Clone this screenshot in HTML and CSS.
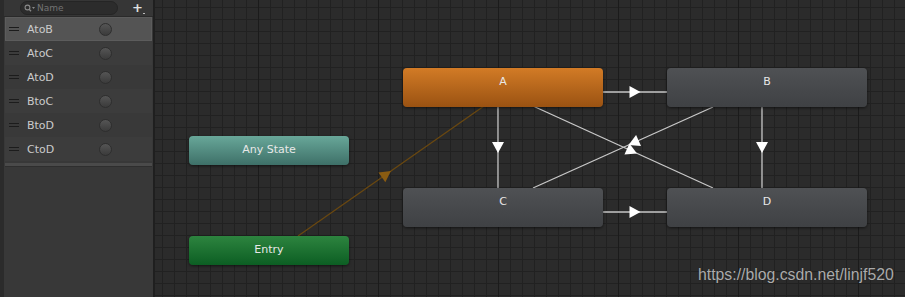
FILE: index.html
```html
<!DOCTYPE html>
<html lang="en">
<head>
  <meta charset="UTF-8" />
  <title>Animator</title>
  <link rel="stylesheet" href="styles.css">
</head>
<body>
  <aside class="panel">
    <div class="toolbar">
      <div class="search">
        <svg class="search-icon" width="12" height="9" viewBox="0 0 12 9">
          <circle cx="3.5" cy="3.5" r="2.4" fill="none" stroke="#8a8a8a" stroke-width="1.1"/>
          <line x1="5.2" y1="5.2" x2="7" y2="7.2" stroke="#8a8a8a" stroke-width="1.3"/>
          <polygon points="8,3 11,3 9.5,5" fill="#8a8a8a"/>
        </svg>
        <span class="placeholder">Name</span>
      </div>
      <div class="add">+<span class="add-dot"></span></div>
    </div>

    <ul class="params">
      <li class="param selected"><span class="grip"></span><span class="name">AtoB</span><span class="toggle"></span></li>
      <li class="param"><span class="grip"></span><span class="name">AtoC</span><span class="toggle"></span></li>
      <li class="param"><span class="grip"></span><span class="name">AtoD</span><span class="toggle"></span></li>
      <li class="param"><span class="grip"></span><span class="name">BtoC</span><span class="toggle"></span></li>
      <li class="param"><span class="grip"></span><span class="name">BtoD</span><span class="toggle"></span></li>
      <li class="param"><span class="grip"></span><span class="name">CtoD</span><span class="toggle"></span></li>
    </ul>
    <div class="list-footer"></div>
  </aside>

  <main class="graph">
    <!-- transitions -->
    <svg class="links" width="750" height="297" viewBox="0 0 750 297">
      <g stroke="#c9c9c9" stroke-width="1.3" fill="none">
        <line x1="447" y1="92" x2="512" y2="92"/>
        <line x1="448" y1="212" x2="512" y2="212"/>
        <line x1="343" y1="107" x2="343" y2="188"/>
        <line x1="607" y1="107" x2="607" y2="188"/>
        <line x1="558" y1="107" x2="378" y2="188"/>
        <line x1="378" y1="106" x2="558" y2="188"/>
      </g>
      <line x1="143" y1="236" x2="329" y2="106" stroke="#6a4810" stroke-width="1.3"/>
      <g fill="#ffffff">
        <polygon points="-5,-6 6,0 -5,6" transform="translate(479.5 92)"/>
        <polygon points="-5,-6 6,0 -5,6" transform="translate(479.5 212)"/>
        <polygon points="-5,-6 6,0 -5,6" transform="translate(343 147) rotate(90)"/>
        <polygon points="-5,-6 6,0 -5,6" transform="translate(607 147) rotate(90)"/>
        <polygon points="-5,-6 6,0 -5,6" transform="translate(479 142.5) rotate(155.8)"/>
        <polygon points="-5,-6 6,0 -5,6" transform="translate(476.5 151) rotate(24.5)"/>
      </g>
      <polygon points="-5,-6 6,0 -5,6" fill="#8a5c12" transform="translate(231 174.5) rotate(-34.9)"/>
    </svg>

    <div class="node state default" style="left:248px; top:68px;">A</div>
    <div class="node state" style="left:512px; top:68px;">B</div>
    <div class="node state" style="left:248px; top:188px;">C</div>
    <div class="node state" style="left:512px; top:188px;">D</div>
    <div class="node special any" style="left:34px; top:136px;">Any State</div>
    <div class="node special entry" style="left:34px; top:236px;">Entry</div>

    <div class="watermark">https://blog.csdn.net/linjf520</div>
  </main>
</body>
</html>
```

FILE: styles.css
```css
body {
  margin: 0;
  width: 905px;
  height: 297px;
  display: flex;
  overflow: hidden;
  font-family: 'DejaVu Sans', 'Noto Sans', sans-serif;
  font-size: 11px;
  background: #2a2a2a;
}

/* left parameter panel */
.panel {
  width: 149px;
  height: 297px;
  flex: none;
  background: #383838;
  border-left: 4px solid #2b2b2b;
  border-right: 2px solid #1f1f1f;
  display: flex;
  flex-direction: column;
}
.toolbar {
  height: 16px;
  border-bottom: 1px solid #2a2a2a;
  background: #363636;
  display: flex;
  align-items: center;
}
.search {
  margin-left: 16px;
  width: 96px;
  height: 12px;
  border-radius: 7px;
  background: #2c2c2c;
  border: 1px solid #252525;
  display: flex;
  align-items: center;
}
.search-icon {
  margin-left: 3px;
}
.placeholder {
  margin-left: 1px;
  color: #737373;
  font-size: 9px;
  line-height: 12px;
}
.add {
  position: relative;
  margin-left: 14px;
  color: #e0e0e0;
  font-weight: bold;
  font-size: 13px;
  line-height: 14px;
}
.add-dot {
  position: absolute;
  right: -2px;
  bottom: 1px;
  width: 2px;
  height: 1px;
  background: #bdbdbd;
}

.params {
  list-style: none;
  margin: 0;
  padding: 0 1px;
}
.param {
  height: 24px;
  display: flex;
  align-items: center;
  background: #393939;
}
.param:nth-child(even) {
  background: #3c3c3c;
}
.param.selected {
  background: #545454;
  box-shadow: inset 0 0 0 1px #5c5c5c, inset 0 -1px 0 #404040;
}
.grip {
  margin-left: 4px;
  width: 10px;
  height: 2px;
  border-top: 1px solid #1c1c1c;
  border-bottom: 1px solid #1c1c1c;
}
.name {
  margin-left: 8px;
  width: 72px;
  color: #cbcbcb;
}
.toggle {
  width: 11px;
  height: 11px;
  border-radius: 50%;
  border: 1px solid #2e2e2e;
  background: linear-gradient(#555555, #3b3b3b);
}
.list-footer {
  margin: 2px 1px 0;
  height: 3px;
  background: #4a4a4a;
  border-bottom: 1px solid #2e2e2e;
}

/* graph canvas */
.graph {
  position: relative;
  flex: 1;
  height: 297px;
  background-color: #2b2b2b;
  background-image:
    linear-gradient(to right, #1b1b1b 1px, transparent 1px),
    linear-gradient(to right, #212121 1px, transparent 1px),
    linear-gradient(to bottom, #212121 1px, transparent 1px);
  background-size: 120px 120px, 12px 12px, 12px 12px;
  background-position: 103px 0, 7px 0, 0 7px;
}
.links {
  position: absolute;
  left: 0;
  top: 0;
}
.node {
  position: absolute;
  box-sizing: border-box;
  border-radius: 4px;
  text-align: center;
  color: #e8e8e8;
  padding-top: 7px;
  line-height: 14px;
  box-shadow: 0 1px 3px rgba(0, 0, 0, 0.55);
}
.state {
  width: 200px;
  height: 39px;
  background: linear-gradient(#4f5154, #3f4144);
}
.state.default {
  background: linear-gradient(#d27b26, #9a5212);
}
.special {
  width: 160px;
  height: 29px;
}
.any {
  background: linear-gradient(#68a799, #3e7068);
}
.entry {
  background: linear-gradient(#2d843f, #0c5e23);
}
.watermark {
  position: absolute;
  left: 543px;
  top: 266px;
  font-family: 'Liberation Sans', Arial, sans-serif;
  font-size: 15.8px;
  color: #ababab;
  text-shadow: 0 0 1px rgba(0, 0, 0, 0.4);
}
```
